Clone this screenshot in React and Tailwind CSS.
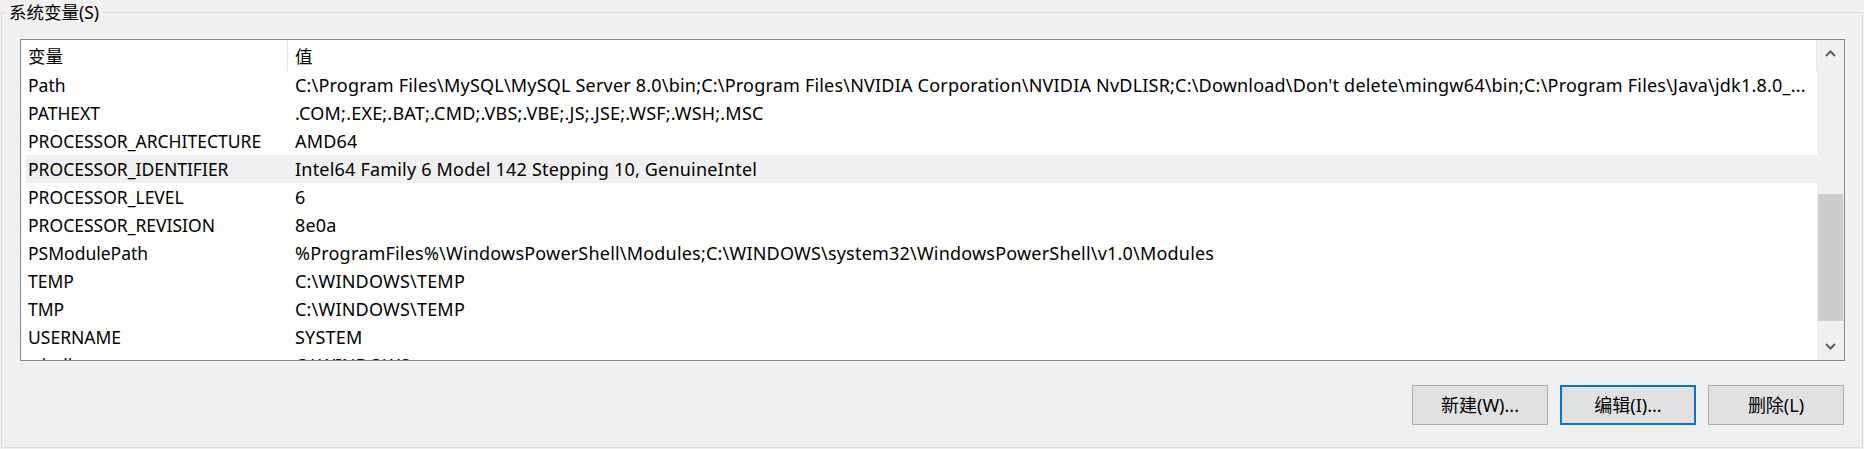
const font = { fontFamily: "'Noto Sans', 'Noto Sans CJK SC', sans-serif" };

const variables = [
  ['Path', "C:\\Program Files\\MySQL\\MySQL Server 8.0\\bin;C:\\Program Files\\NVIDIA Corporation\\NVIDIA NvDLISR;C:\\Download\\Don't delete\\mingw64\\bin;C:\\Program Files\\Java\\jdk1.8.0_..."],
  ['PATHEXT', '.COM;.EXE;.BAT;.CMD;.VBS;.VBE;.JS;.JSE;.WSF;.WSH;.MSC'],
  ['PROCESSOR_ARCHITECTURE', 'AMD64'],
  ['PROCESSOR_IDENTIFIER', 'Intel64 Family 6 Model 142 Stepping 10, GenuineIntel'],
  ['PROCESSOR_LEVEL', '6'],
  ['PROCESSOR_REVISION', '8e0a'],
  ['PSModulePath', '%ProgramFiles%\\WindowsPowerShell\\Modules;C:\\WINDOWS\\system32\\WindowsPowerShell\\v1.0\\Modules'],
  ['TEMP', 'C:\\WINDOWS\\TEMP'],
  ['TMP', 'C:\\WINDOWS\\TEMP'],
  ['USERNAME', 'SYSTEM'],
  ['windir', 'C:\\WINDOWS'],
];

const selectedName = 'PROCESSOR_IDENTIFIER';

function Chevron({ up }) {
  return (
    <svg width="11" height="7" viewBox="0 0 11 7">
      <polyline
        points={up ? '1,6 5.5,1.5 10,6' : '1,1 5.5,5.5 10,1'}
        fill="none"
        stroke="#606060"
        strokeWidth="2"
      />
    </svg>
  );
}

function VarRow({ name, value }) {
  const selected = name === selectedName;
  return (
    <div className={`flex h-[28px] shrink-0 items-center ${selected ? 'bg-[#f0f0f0]' : ''}`}>
      <div className="w-[261px] shrink-0 pl-[2px] text-[17.5px] whitespace-nowrap">{name}</div>
      <div className="flex-1 truncate pl-[8px] pr-[9px] text-[18px] tracking-[0.2px]">{value}</div>
    </div>
  );
}

function WinButton({ children, focused }) {
  return (
    <button
      type="button"
      className={`flex h-[40px] w-[136px] items-center justify-center bg-[#e1e1e1] text-[18px] text-black ${
        focused ? 'border-2 border-[#0078d7]' : 'border border-[#adadad]'
      }`}
    >
      {children}
    </button>
  );
}

export default function App() {
  return (
    <div className="flex h-[449px] w-[1864px] bg-[#f0f0f0] pl-px text-black" style={font}>
      <fieldset className="flex h-[448px] w-[1862px] flex-col border border-[#dcdcdc]">
        <legend className="ml-[4px] px-[3px] text-[17.5px] leading-[24px]">系统变量(S)</legend>

        <div className="ml-[18px] mt-[15px] flex h-[322px] w-[1825px] border border-[#828790] bg-white text-[17.5px]">
          <div className="flex flex-1 flex-col overflow-hidden">
            <div className="flex h-[31px] shrink-0 items-center">
              <div className="w-[266px] shrink-0 pl-[7px] pt-[2px]">变量</div>
              <div className="h-full w-px bg-[#e5e5e5]" />
              <div className="flex-1 pl-[7px] pt-[2px]">值</div>
              <div className="h-full w-px bg-[#e5e5e5]" />
            </div>
            <div className="flex flex-col pl-[5px]">
              {variables.map(([name, value]) => (
                <VarRow key={name} name={name} value={value} />
              ))}
            </div>
          </div>

          <div className="flex w-[27px] shrink-0 flex-col bg-[#f0f0f0]">
            <div className="flex h-[27px] items-center justify-center pr-px">
              <Chevron up />
            </div>
            <div className="flex-1 px-px">
              <div className="mt-[127px] h-[127px] bg-[#cdcdcd]" />
            </div>
            <div className="flex h-[27px] items-center justify-center pr-px">
              <Chevron />
            </div>
          </div>
        </div>

        <div className="mr-[18px] mt-[24px] flex justify-end gap-[12px]">
          <WinButton>新建(W)...</WinButton>
          <WinButton focused>编辑(I)...</WinButton>
          <WinButton>删除(L)</WinButton>
        </div>
      </fieldset>
    </div>
  );
}
